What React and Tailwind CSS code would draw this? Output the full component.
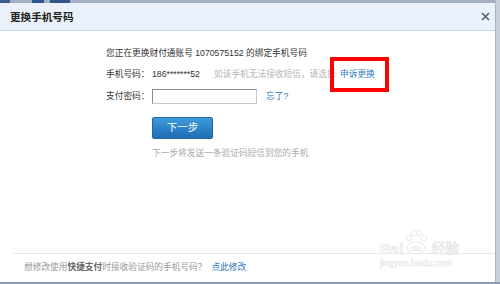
export default function App() {
  const font = { fontFamily: '"Liberation Sans", "Noto Sans CJK SC", sans-serif' };
  return (
    <div className="relative w-[500px] h-[284px] overflow-hidden bg-[#c9d0da]" style={font}>
      <div className="flex flex-col w-[496px] h-[282px] bg-white border-r border-[#aab4c2]">
        <div className="flex h-[3px] bg-[#a4b0c2]">
          <div className="w-[10px] bg-[#3a5b8c]" />
          <div className="w-[22px]" />
          <div className="w-[12px] bg-[#2f5590]" />
          <div className="w-[6px]" />
          <div className="w-[20px] bg-[#35568a]" />
        </div>
        <div className="flex items-center justify-between h-[28px] bg-[#eaf1fa] border-b border-[#c5d4e6] pl-[10px] pr-[6px]">
          <span className="text-[10.6px] leading-[12px] text-[#222] font-bold">更换手机号码</span>
          <svg width="9" height="9" viewBox="0 0 9 9" className="mr-[-1px]">
            <path d="M1 1 L8 8 M8 1 L1 8" stroke="#50607a" strokeWidth="1.6" />
          </svg>
        </div>
        <div className="flex flex-col flex-1 pl-[106px] pt-[16px] text-[8.7px] text-[#333]">
          <div className="h-[12px] leading-[12px] whitespace-nowrap">您正在更换财付通账号 1070575152 的绑定手机号码</div>
          <div className="flex items-center h-[12px] leading-[12px] mt-[9px] whitespace-nowrap">
            <span className="w-[46px]">手机号码：</span>
            <span className="w-[62px]">186*******52</span>
            <span className="w-[126px] overflow-hidden text-[#b4b4b4]">如该手机无法接收短信，请选择</span>
            <span className="text-[#2a78c0]">申诉更换</span>
          </div>
          <div className="flex items-center h-[15px] mt-[9px] whitespace-nowrap">
            <span className="w-[46px]">支付密码：</span>
            <div className="w-[105px] h-[15px] border border-[#8e8e8e] border-r-[#c8c8c8] border-b-[#c8c8c8] bg-white" />
            <span className="ml-[9px] text-[#2a78c0]">忘了?</span>
          </div>
          <div className="mt-[13px] ml-[46px] w-[61px] h-[22px] flex items-center justify-center rounded-[2px] border border-[#1d66a8] bg-gradient-to-b from-[#3e9ade] to-[#1f6db3] text-white text-[10.5px]">
            下一步
          </div>
          <div className="mt-[8px] ml-[46px] h-[12px] leading-[12px] text-[#aaaaaa] whitespace-nowrap">下一步将发送一条验证码短信到您的手机</div>
        </div>
        <div className="ml-[14px] h-[1px] bg-[#e8e8e8]" />
        <div className="h-[28px] flex items-center pl-[24px] text-[8.7px] text-[#999] whitespace-nowrap">
          <span>想修改使用</span>
          <span className="font-bold text-[#666]">快捷支付</span>
          <span>时接收验证码的手机号码？</span>
          <span className="ml-[5px] text-[#2a78c0]">点此修改</span>
        </div>
      </div>
      <div className="absolute left-0 bottom-0 w-[500px] h-[2px] bg-[#8a9bb3]" />
      <div className="absolute left-[330px] top-[57px] w-[59px] h-[35px] border-[4px] border-[#ff0000]" />
      <div className="absolute left-[380px] top-[229px] flex flex-col items-start pointer-events-none">
        <div className="flex items-end h-[27px]">
          <span className="text-[15px] leading-[15px] font-bold text-white [-webkit-text-stroke:0.6px_#e2e2e2]">Bai</span>
          <svg width="24" height="27" viewBox="0 0 24 27" className="mx-[1px]">
            <g fill="white" stroke="#e2e2e2" strokeWidth="0.8">
              <ellipse cx="5" cy="9" rx="2.5" ry="3" />
              <ellipse cx="10" cy="4" rx="2.5" ry="3" />
              <ellipse cx="15" cy="4" rx="2.5" ry="3" />
              <ellipse cx="20" cy="9" rx="2.5" ry="3" />
              <ellipse cx="12" cy="19" rx="9" ry="6" />
            </g>
            <text x="12" y="22" textAnchor="middle" fontSize="8" fontWeight="bold" fill="white" stroke="#e2e2e2" strokeWidth="0.4" fontFamily="Liberation Sans, sans-serif">du</text>
          </svg>
          <span className="text-[14px] leading-[15px] text-white [-webkit-text-stroke:0.6px_#e2e2e2] ml-[2px]">经验</span>
        </div>
        <span className="mt-[3px] text-[8.5px] leading-[9px] text-white [-webkit-text-stroke:0.5px_#e6e6e6] tracking-[0.2px]">jingyan.baidu.com</span>
      </div>
    </div>
  );
}
